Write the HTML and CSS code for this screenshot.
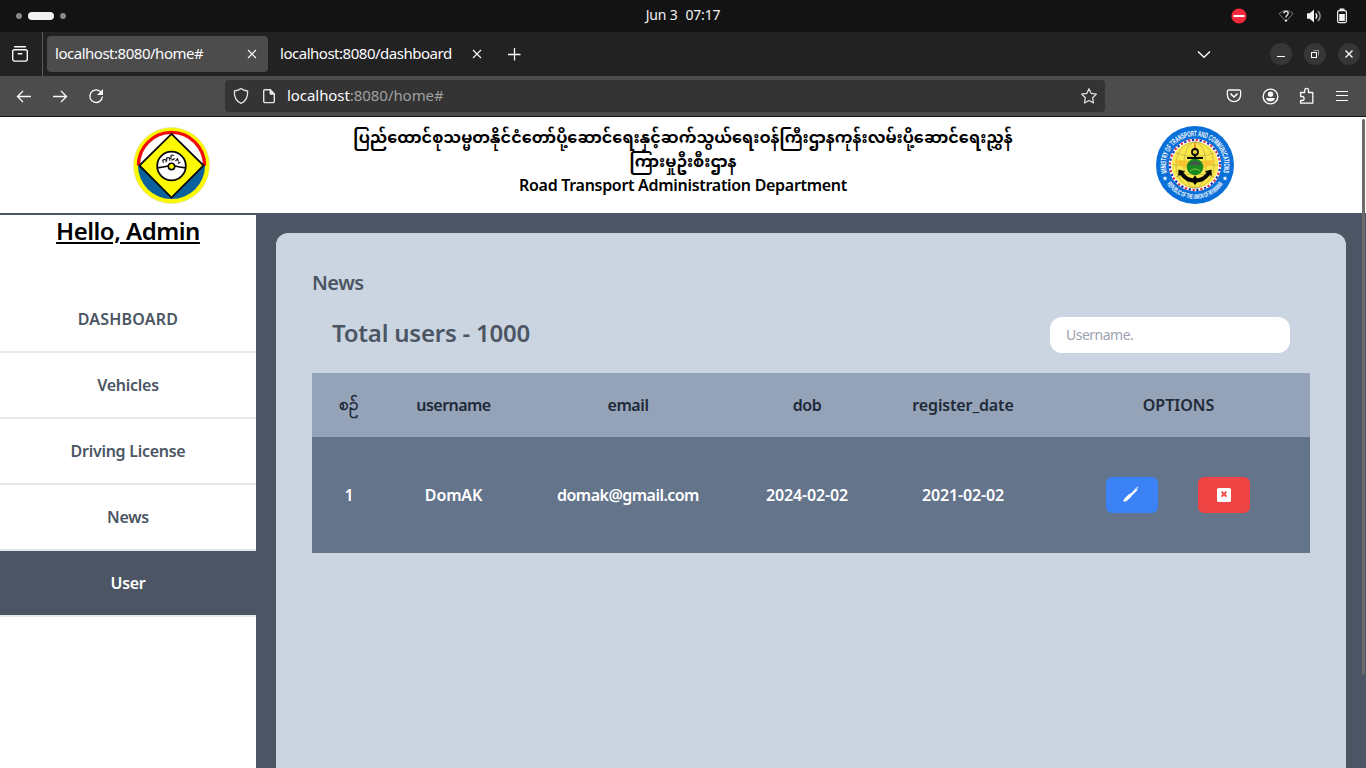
FILE: index.html
```html
<!DOCTYPE html>
<html lang="en">
<head>
<meta charset="utf-8">
<title>Road Transport Administration Department</title>
<link rel="stylesheet" href="styles.css">
</head>
<body>
<div class="desktop">
  <div class="topbar">
    <div class="workspaces"><i class="dot"></i><i class="pill"></i><i class="dot"></i></div>
    <div class="clock"><span>Jun 3</span><span>07:17</span></div>
    <div class="tray">
      <svg class="i-dnd" width="16" height="16" viewBox="0 0 16 16"><circle cx="8" cy="8" r="7.600" fill="#f5283c"/><rect x="2.500" y="7" width="11" height="2" fill="#fff"/></svg>
      <svg class="i-wifi" width="16" height="16" viewBox="0 0 16 16" fill="none"><path d="M8 13.600L1 5.600Q8-.6 15 5.600Z" stroke="#777" stroke-width="1"/><path d="M5.800 5.400C6 2.600 10.500 2.800 10.200 5.400C10 7.200 8 7.200 8 9.400" stroke="#f2f2f2" stroke-width="1.300"/><circle cx="8" cy="12.600" r="1.100" fill="#f2f2f2"/></svg>
      <svg class="i-vol" width="16" height="16" viewBox="0 0 16 16" fill="none"><path d="M1 5.300h2.700L8 1.400v13.200L3.700 10.700H1z" fill="#f2f2f2"/><path d="M9.800 5.400q2 2.600 0 5.200" stroke="#f2f2f2" stroke-width="1.400"/><path d="M12 3q4.300 5 0 10" stroke="#999" stroke-width="1.400"/></svg>
      <svg class="i-bat" width="12" height="16" viewBox="0 0 12 16" fill="none"><path d="M3.500 1.500h5" stroke="#f2f2f2" stroke-width="2"/><rect x="1.600" y="2.600" width="8.800" height="12" rx="1.500" stroke="#f2f2f2" stroke-width="1.200"/><rect x="3.200" y="6" width="5.600" height="7" fill="#f2f2f2"/></svg>
    </div>
  </div>

  <div class="tabbar">
    <div class="history">
      <svg width="18" height="18" viewBox="0 0 18 18" fill="none" stroke="#fbfbfe" stroke-width="1.400" stroke-linecap="round"><path d="M3.600 1.700h10.800"/><rect x="1.700" y="4.700" width="14.600" height="11.400" rx="2"/><path d="M7.200 8.800h3.600"/></svg>
    </div>
    <div class="tab active"><span>localhost:8080/home#</span><svg width="10" height="10" viewBox="0 0 10 10" stroke="#fbfbfe" stroke-width="1.100"><path d="M1 1l8 8M9 1l-8 8"/></svg></div>
    <div class="tab"><span>localhost:8080/dashboard</span><svg width="10" height="10" viewBox="0 0 10 10" stroke="#fbfbfe" stroke-width="1.100"><path d="M1 1l8 8M9 1l-8 8"/></svg></div>
    <svg class="newtab" width="14" height="14" viewBox="0 0 14 14" stroke="#fbfbfe" stroke-width="1.300"><path d="M7.500 1v12.500M1 7.500h12.500"/></svg>
    <svg class="alltabs" width="14" height="9" viewBox="0 0 14 9" fill="none" stroke="#fbfbfe" stroke-width="1.400"><path d="M1 1.500l6 5.700 6-5.700"/></svg>
    <div class="winbtns">
      <b><svg width="22" height="22" viewBox="0 0 22 22"><path d="M7 13.500h8" stroke="#fff"/></svg></b>
      <b><svg width="22" height="22" viewBox="0 0 22 22" fill="none"><path d="M9.500 7.500h5v5" stroke="#999"/><rect x="7.500" y="9.500" width="5" height="5" stroke="#fff"/></svg></b>
      <b><svg width="22" height="22" viewBox="0 0 22 22"><path d="M7.500 7.500l7 7M14.500 7.500l-7 7" stroke="#fff" stroke-width="1.300"/></svg></b>
    </div>
  </div>

  <div class="navbar">
    <div class="navbtns">
      <svg width="16" height="16" viewBox="0 0 16 16" fill="none" stroke="#fbfbfe" stroke-width="1.300"><path d="M15 8.500H1.500M7 3L1.500 8.500 7 14"/></svg>
      <svg width="16" height="16" viewBox="0 0 16 16" fill="none" stroke="#fbfbfe" stroke-width="1.300"><path d="M1 8.500h13.500M9 3l5.500 5.500L9 14"/></svg>
      <svg width="16" height="16" viewBox="0 0 16 16" fill="none" stroke="#fbfbfe" stroke-width="1.300"><path d="M13 4.200A6.300 6.300 0 1 0 14.400 8.500"/><path d="M15 1v6H9z" fill="#fbfbfe" stroke="none"/></svg>
    </div>
    <div class="urlbar">
      <svg width="16" height="18" viewBox="0 0 16 18" fill="none" stroke="#e4e4e6" stroke-width="1.300" stroke-linejoin="round"><path d="M8 1.400Q10.400 3.300 14.600 4C15 9.500 12.600 14.400 8 16.300C3.400 14.400 1 9.500 1.400 4Q5.600 3.300 8 1.400z"/></svg>
      <svg class="i-page" width="14" height="16" viewBox="0 0 14 16" fill="none"><path d="M8.300 1.700H3A1.300 1.300 0 0 0 1.700 3v10.300A1.300 1.300 0 0 0 3 14.600h8a1.300 1.300 0 0 0 1.300-1.300V6z" stroke="#e4e4e6" stroke-width="1.400"/><path d="M8 1.400V6.200h4.700z" fill="#e4e4e6" stroke="#e4e4e6"/></svg>
      <span class="url"><em>localhost</em>:8080/home#</span>
      <svg class="i-star" width="18" height="18" viewBox="0 0 18 18" fill="none" stroke="#e4e4e6" stroke-width="1.200" stroke-linejoin="round"><path d="M9 1.700l2.200 4.700 5.200.7-3.800 3.600.9 5.200L9 13.400l-4.500 2.500.9-5.200L1.600 7.100l5.200-.7z"/></svg>
    </div>
    <div class="tools">
      <svg width="16" height="16" viewBox="0 0 16 16" fill="none" stroke="#fbfbfe" stroke-width="1.300"><path d="M2.700 2h10.600a1.300 1.300 0 0 1 1.300 1.300V7A6.600 6.600 0 0 1 1.400 7V3.300A1.300 1.300 0 0 1 2.700 2z"/><path d="M4.500 5.700L8 9l3.500-3.300" stroke-width="1.600"/></svg>
      <svg width="17" height="17" viewBox="0 0 16 16" fill="none"><circle cx="8" cy="8" r="6.900" stroke="#fbfbfe" stroke-width="1.300"/><circle cx="8" cy="5.800" r="2.500" fill="#fbfbfe"/><path d="M3.800 9.400h8.400Q11.600 12.600 8 12.600T3.800 9.400z" fill="#fbfbfe"/></svg>
      <svg width="16" height="18" viewBox="0 0 16 18" fill="none" stroke="#fbfbfe" stroke-width="1.300" stroke-linejoin="round"><path d="M1.600 8V5.500h4.100V3.300a1.900 1.900 0 0 1 3.800 0v2.200h4.300v10.700H1.600v-2.700h1.500a2 2 0 0 0 0-4H1.600z"/></svg>
      <svg width="16" height="16" viewBox="0 0 16 16" stroke="#fbfbfe" stroke-width="1.200"><path d="M2 3.500h12M2 7.500h12M2 12.500h12"/></svg>
    </div>
  </div>

  <div class="page">
    <header class="header">
      <div class="logo-left">
        <svg width="77" height="77" viewBox="0 0 78 78">
          <circle cx="39" cy="39" r="38.500" fill="#fdf900" stroke="#d9dca0" stroke-width=".6"/>
          <path d="M5 39a34 34 0 0 0 68 0z" fill="#0a619b"/>
          <path d="M5 39a34 34 0 0 1 68 0z" fill="#fff"/>
          <path d="M5.500 39a33.500 33.500 0 0 1 67 0" fill="none" stroke="#f30c0c" stroke-width="3.400"/>
          <path d="M39 7L71.500 39 39 71.500 6.500 39z" fill="#fdf900" stroke="#080808" stroke-width="1.800"/>
          <circle cx="39" cy="39.500" r="14.500" fill="#fff" stroke="#080808" stroke-width="1.800"/>
          <path d="M24.500 41.500q7-1 11-2h7q4 1 11 2" fill="none" stroke="#080808" stroke-width="1.800"/>
          <circle cx="39" cy="40" r="3.200" fill="#fdf900" stroke="#080808" stroke-width="1.600"/>
          <g fill="none" stroke="#111" stroke-width="1.200"><path d="M31 36q-2-2.500.5-3t2 2.700M34.500 34q-1.500-3 1-3t1.500 3M38.500 32.500v-3.500q2-1.500 2.500.5M39 33q2 .8 3-1.300M43 34.500l2-2.300 1 2.800M45.500 37l2.500-1.500"/></g>
        </svg>
      </div>
      <div class="title">
        <p class="mm">ပြည်ထောင်စုသမ္မတနိုင်ငံတော်ပို့ဆောင်ရေးနှင့်ဆက်သွယ်ရေးဝန်ကြီးဌာနကုန်းလမ်းပို့ဆောင်ရေးညွှန်</p>
        <p class="mm">ကြားမှုဦးစီးဌာန</p>
        <p class="en">Road Transport Administration Department</p>
      </div>
      <div class="logo-right">
        <svg width="80" height="80" viewBox="0 0 80 80">
          <defs><path id="arcTop" d="M12.800 50.300A29 29 0 1 1 67.200 50.300"/><path id="arcBot" d="M8.200 52A34 34 0 0 0 71.800 52"/></defs>
          <circle cx="40" cy="40" r="39" fill="#0870d8"/>
          <circle cx="40" cy="40" r="26.300" fill="#fff"/>
          <circle cx="40" cy="40" r="25" fill="none" stroke="#e33148" stroke-width="2.200" stroke-dasharray="2.300 5.550"/>
          <circle cx="40" cy="40" r="25" fill="none" stroke="#2733a8" stroke-width="2.200" stroke-dasharray="2.300 5.550" stroke-dashoffset="3.900"/>
          <circle cx="40" cy="40" r="23.300" fill="#fbe84c"/>
          <g fill="none" stroke="#aaa045" stroke-width=".6"><ellipse cx="40" cy="40" rx="11" ry="23"/><ellipse cx="40" cy="40" rx="19" ry="23"/><path d="M40 17v46M17 40h46M21 28q19 7 38 0M21 52q19-7 38 0"/></g>
          <path d="M20 35.500q12-1 20 3 8-4 20-3-2 6-12 7H32q-10-1-12-7z" fill="#f8c432"/>
          <path d="M39 25l1-9 1 9z" fill="#e8622a"/>
          <circle cx="40" cy="42" r="8.300" fill="#178b20"/>
          <path d="M35 38q5-4 10 0l1 2H34z" fill="#46564c"/><path d="M35 46q5-4 10 0" stroke="#8dc548" fill="none"/>
          <circle cx="40" cy="27" r="3" fill="none" stroke="#080808" stroke-width="1.800"/>
          <path d="M40 30v4M32 33h16" stroke="#080808" stroke-width="2"/>
          <path d="M23.500 44.500l6.500 1.700-1.600 1.600q4 5.200 9.600 5.500l2-3 2 3q5.600-.3 9.600-5.500L50 46.200l6.500-1.700.3 6.500-1.900-1Q49 57.500 42 57.500L40 60l-2-2.500Q31 57.500 25.100 50l-1.900 1z" fill="#080808"/>
          <g class="seal"><text font-size="8"><textPath href="#arcTop" startOffset="2.500" textLength="106" lengthAdjust="spacingAndGlyphs">MINISTRY OF TRANSPORT AND COMMUNICATIONS</textPath></text>
          <text font-size="7"><textPath href="#arcBot" startOffset="8" textLength="66" lengthAdjust="spacingAndGlyphs">REPUBLIC OF THE UNION OF MYANMAR</textPath></text></g>
          <path d="M10 51l.7 1.500 1.700.1-1.300 1.100.5 1.700-1.600-.9-1.500.9.400-1.700-1.300-1.100 1.700-.1zM70 51l.7 1.500 1.700.1-1.300 1.100.5 1.700-1.600-.9-1.500.9.400-1.700-1.300-1.100 1.700-.1z" fill="#fff"/>
        </svg>
      </div>
    </header>
    <div class="body">
      <aside class="sidebar">
        <h1>Hello, Admin</h1>
        <nav>
          <a class="caps">DASHBOARD</a>
          <a>Vehicles</a>
          <a>Driving License</a>
          <a>News</a>
          <a class="current">User</a>
        </nav>
      </aside>
      <main class="main">
        <section class="panel">
          <h3>News</h3>
          <div class="bar">
            <h2>Total users - 1000</h2>
            <input type="text" placeholder="Username.">
          </div>
          <table>
            <colgroup><col class="c1"><col class="c2"><col class="c3"><col class="c4"><col class="c5"><col class="c6"></colgroup>
            <thead><tr><th class="no">စဉ်</th><th class="name">username</th><th class="mail">email</th><th class="mail">dob</th><th>register_date</th><th class="opt">OPTIONS</th></tr></thead>
            <tbody><tr><td>1</td><td>DomAK</td><td class="address">domak@gmail.com</td><td>2024-02-02</td><td>2021-02-02</td>
              <td><div class="actions">
                <button class="edit"><svg width="16" height="16" viewBox="0 0 16 16"><path d="M0 15.200L1.500 12.500 5.500 8.500 8.500 7 12.500 2.500 14.500 2.500 14 4.500 9 9.500 7.500 11.500 3 15.500z" fill="#fff"/><path d="M13.300 1.200l1.400-.8.600 1-.9 1.300z" fill="#c8dcff"/></svg></button>
                <button class="del"><svg width="14" height="14" viewBox="0 0 14 14"><rect width="14" height="14" rx="1.500" fill="#fff"/><path d="M4.500 3.700l5 5M9.500 3.700l-5 5" stroke="#ef4444" stroke-width="1.900"/></svg></button>
              </div></td></tr></tbody>
          </table>
        </section>
      </main>
    </div>
    <i class="scroll"></i>
  </div>
</div>
</body>
</html>
```
FILE: styles.css
```css
* { box-sizing: border-box; margin: 0; padding: 0; }
body { width: 1366px; height: 768px; overflow: hidden; font-family: "Noto Sans", "Open Sans", sans-serif; color: #4b5563; }
svg { display: block; flex: none; }
.desktop { height: 768px; display: flex; flex-direction: column; }

.topbar { height: 32px; flex: none; background: #131313; display: grid; grid-template-columns: 1fr 200px 1fr; align-items: center; color: #f2f2f2; font-size: 14px; }
.workspaces { display: flex; align-items: center; gap: 6px; padding-left: 16px; }
.dot { width: 6px; height: 6px; border-radius: 50%; background: #888; }
.pill { width: 26px; height: 8px; border-radius: 4px; background: #f2f2f2; }
.clock { display: flex; justify-content: center; gap: 8px; padding-bottom: 3px; letter-spacing: -.2px; }
.tray { display: flex; justify-content: flex-end; align-items: center; padding-right: 18px; }
.i-dnd { margin-right: 31px; }
.i-wifi { margin-right: 12px; }
.i-vol { margin-right: 14px; }

.tabbar { height: 44px; flex: none; background: #222; display: flex; align-items: center; color: #fbfbfe; font-size: 15px; letter-spacing: -.48px; }
.history { width: 43px; height: 44px; border-right: 1px solid #5a5a5a; padding: 13px 0 0 11px; }
.tab { height: 36px; width: 221px; margin-left: 4px; padding: 0 11px 2px 8px; display: flex; align-items: center; justify-content: space-between; border-radius: 4px; }
.tab.active { background: #4c4c4c; }
.tab svg { margin-top: 2px; }
.newtab { margin-left: 14px; }
.alltabs { margin-left: 676px; }
.winbtns { display: flex; gap: 12px; margin-left: 59px; }
.winbtns b { width: 22px; height: 22px; border-radius: 50%; background: #363636; }

.navbar { height: 41px; flex: none; background: #4c4c4c; border-bottom: 1px solid #161616; display: flex; align-items: center; }
.navbtns { display: flex; gap: 20px; width: 225px; padding-left: 16px; }
.urlbar { width: 880px; height: 32px; background: #343434; border-radius: 4px; display: flex; align-items: center; padding: 0 7px 0 8px; color: #a0a0a0; font-size: 15px; letter-spacing: -.06px; }
.i-page { margin-left: 13px; }
.url { margin-left: 11px; padding-bottom: 2px; }
.url em { font-style: normal; color: #fbfbfe; }
.i-star { margin-left: auto; }
.tools { display: flex; align-items: center; gap: 20px; margin-left: 121px; }
.tools svg:last-child { margin-left: -1px; }

.page { flex: 1; display: flex; flex-direction: column; position: relative; min-height: 0; }
.header { height: 98px; flex: none; border-bottom: 2px solid #4b5563; background: #fff; display: grid; grid-template-columns: 342px 1fr 342px; }
.logo-left { padding: 10px 0 0 133px; }
.logo-right { padding: 8px 0 0 131px; }
.title { color: #000; font-weight: 600; font-size: 16px; line-height: 24px; text-align: center; padding-top: 8px; }
.mm { white-space: nowrap; font-family: "Noto Sans", "Noto Sans Myanmar", "Padauk", sans-serif; font-weight: 700; height: 24px; }
.en { white-space: nowrap; height: 24px; letter-spacing: -.3px; }

.body { flex: 1; display: flex; min-height: 0; }
.sidebar { width: 256px; background: #fff; }
.sidebar h1 { height: 72px; color: #000; font-size: 24px; font-weight: 600; line-height: 32px; text-align: center; text-decoration: underline; letter-spacing: -.5px; }
.sidebar a { display: block; height: 66px; line-height: 64px; border-bottom: 2px solid #e5e7eb; text-align: center; font-size: 16px; font-weight: 600; letter-spacing: -.27px; }
.sidebar .caps { letter-spacing: .2px; }
.sidebar .current { background: #4b5563; color: #fff; }
.main { flex: 1; background: #4b5563; padding: 18px 20px 0; }
.panel { height: 100%; background: #cbd5e1; border-radius: 12px 12px 0 0; padding: 36px 36px 0; }
.panel h3 { font-size: 20px; line-height: 28px; font-weight: 600; letter-spacing: -.5px; }
.bar { display: flex; justify-content: space-between; padding: 20px 20px; height: 76px; }
.bar h2 { font-size: 24px; line-height: 32px; font-weight: 600; letter-spacing: -.23px; }
.bar input { width: 240px; height: 36px; border: 0; border-radius: 12px; background: #fff; padding: 0 16px 2px; font: 14px "Noto Sans", sans-serif; letter-spacing: -.5px; }
.bar input::placeholder { color: #9ca3af; opacity: 1; }
table { width: 998px; table-layout: fixed; border-collapse: collapse; font-size: 16px; font-weight: 600; text-align: center; letter-spacing: -.15px; }
.c1 { width: 74px; } .c2 { width: 135px; } .c3 { width: 214px; } .c4 { width: 144px; } .c5 { width: 168px; } .c6 { width: 263px; }
thead tr { height: 64px; background: #94a3b8; color: #1f2937; }
th { font-weight: 600; }
.no { font-weight: 700; font-size: 17px; letter-spacing: 0; }
.name { letter-spacing: -.55px; }
.mail { letter-spacing: -.4px; }
.opt { letter-spacing: 0; }
.address { letter-spacing: -.53px; }
tbody tr { height: 116px; background: #64748b; color: #fff; }
.actions { display: flex; justify-content: center; gap: 40px; padding-right: 2px; }
button { width: 52px; height: 36px; border: 0; border-radius: 6px; display: flex; align-items: center; justify-content: center; }
.edit { background: #3b82f6; }
.edit svg { margin: 0 2px 2px 0; }
.del { background: #ef4444; }
.scroll { position: absolute; right: 1px; top: 2px; width: 3px; height: 556px; border-radius: 2px; background: #6b6b6b; }
.seal text { fill: #fff; font-family: "Liberation Sans", sans-serif; font-weight: 700; }
```
